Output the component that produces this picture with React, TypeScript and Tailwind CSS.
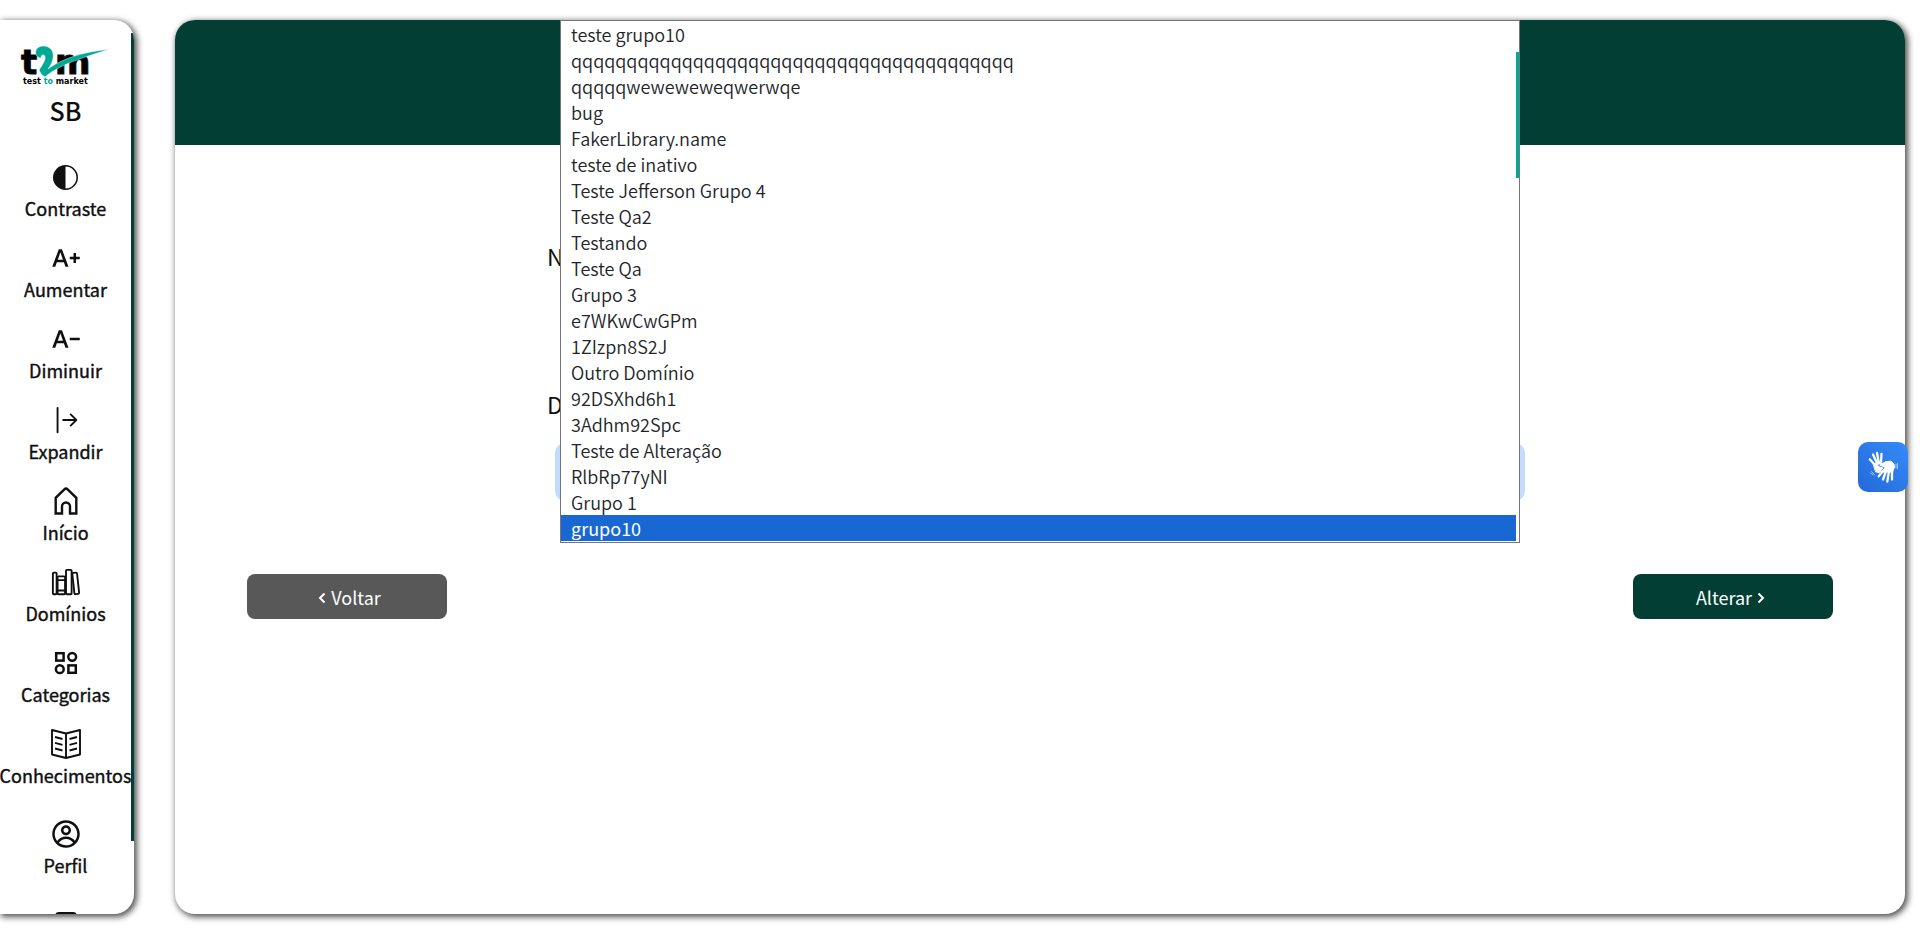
import { useState } from 'react';
import type { ReactNode } from 'react';
import { BsCircleHalf, BsArrowBarRight } from 'react-icons/bs';
import { MdTextIncrease, MdTextDecrease } from 'react-icons/md';
import { IoLibraryOutline } from 'react-icons/io5';
import { CgProfile } from 'react-icons/cg';

function HomeIcon() {
  return (
    <svg viewBox="0 0 30 30" className="size-[30px]" fill="none" stroke="currentColor" strokeWidth="2.4">
      <path d="M4.700 27.500V11.800L13.400 3.300a2.300 2.300 0 0 1 3.200 0L25.300 11.800V27.500H19V20.500a4 4 0 0 0-8 0v7z" />
    </svg>
  );
}

function CategoryIcon() {
  return (
    <svg viewBox="0 0 24 24" className="size-6" fill="none" stroke="currentColor" strokeWidth="2.5">
      <rect x="2.200" y="2.200" width="7.400" height="7.400" />
      <circle cx="18.200" cy="5.800" r="3.900" />
      <circle cx="5.800" cy="18.200" r="3.900" />
      <rect x="14.400" y="14.400" width="7.400" height="7.400" />
    </svg>
  );
}

function BookIcon() {
  return (
    <svg viewBox="0 0 30 30" className="size-[30px]" fill="none" stroke="currentColor" strokeWidth="1.900" strokeLinejoin="round">
      <path d="M1 1 15 4.500 29 1v24.500L15 29 1 25.500zM15 4.500v24.500" />
      <path d="m4 8 7.500 2M4 13.800l7.500 2M4 19.500l7.500 2M26 8l-7.500 2M26 13.800l-7.500 2M26 19.500l-7.500 2" />
    </svg>
  );
}

function HandsIcon() {
  return (
    <svg viewBox="0 0 30 32" className="h-8 w-[30px]" fill="none" stroke="currentColor" strokeLinecap="round" strokeLinejoin="round">
      <g strokeWidth="2.300">
        <path d="M1.800 8.300 7 14M5 3.500 9 12M9 1.800l1.800 10M13.500 3 13 12" />
        <path d="m15 20-4.300 5.300M18 20l-3 8.500M21 20l-1.700 10.500M24 19v9.500" />
      </g>
      <path fill="currentColor" strokeWidth="1" d="M5.500 13 12.500 10.500 14 12 9.500 13.500 10 15.500 15 17 11.500 21.500 8 21z" />
      <path fill="currentColor" strokeWidth="1" d="M12 14 18 10.500 23 10.200 26 13 26.500 16 24.500 21 14 21 17 16.500z" />
      <path strokeWidth=".8" d="M28 13v4M29.500 12.500v5M3.500 20.500l3 3M2.500 22l3 2" opacity=".7" />
    </svg>
  );
}

function Chevron({ d }: { d: string }) {
  return (
    <svg viewBox="0 0 18 18" className="mt-0.5 size-[18px]" fill="none" stroke="currentColor" strokeWidth="2">
      <path d={d} />
    </svg>
  );
}

function Logo() {
  return (
    <svg viewBox="0 0 90 46" className="h-[46px] w-[90px] overflow-visible" role="img" aria-label="t2m test to market">
      <g fontSize="34" fontWeight="700" fontFamily="DejaVu Sans, sans-serif" stroke="currentColor" strokeWidth="1">
        <text x="0" y="34">t</text>
        <text x="34" y="34">m</text>
      </g>
      <path fill="#00a896" stroke="#fff" strokeWidth=".4" d="M14.700 11C16 6 23 5 27 7c6 3 6 9 4 15-1 3-3 5-4 7C43 17 65 12 88 9.300 65 17 41 23 24 36.700c-3-1-5-4-5.700-7C23 23 26 17 23 15c-2-1-3 1-3 3C17 18 14 15 14.700 11z" />
      <text x="2" y="44" fontSize="8" fontWeight="700" fontFamily="DejaVu Sans, sans-serif">
        test <tspan fill="#00a896">to</tspan> market
      </text>
    </svg>
  );
}

function NavItem({ icon, label }: { icon: ReactNode; label: string }) {
  return (
    <a href="#" className="flex h-[81px] shrink-0 flex-col items-center gap-px pt-[3px]">
      <span className="flex h-8 items-center justify-center">{icon}</span>
      <span className="text-lg leading-7 whitespace-nowrap [-webkit-text-stroke:0.4px]">{label}</span>
    </a>
  );
}

const groups = [
  'teste grupo10',
  'qqqqqqqqqqqqqqqqqqqqqqqqqqqqqqqqqqqqqqqq',
  'qqqqqweweweweqwerwqe',
  'bug',
  'FakerLibrary.name',
  'teste de inativo',
  'Teste Jefferson Grupo 4',
  'Teste Qa2',
  'Testando',
  'Teste Qa',
  'Grupo 3',
  'e7WKwCwGPm',
  '1ZIzpn8S2J',
  'Outro Domínio',
  '92DSXhd6h1',
  '3Adhm92Spc',
  'Teste de Alteração',
  'RlbRp77yNI',
  'Grupo 1',
  'grupo10',
];

export default function App() {
  const [selected, setSelected] = useState('grupo10');

  return (
    <div className="flex h-screen gap-[41px] overflow-hidden bg-white py-5 pr-[15px] font-['Noto_Sans_CJK_JP',sans-serif] text-[#0f0f0f]">
      <aside className="relative flex w-[134px] shrink-0 flex-col overflow-hidden rounded-r-[20px] pr-[3px] shadow-[2px_2px_6px_1px_#000000b0]">
        <div className="flex h-[138px] shrink-0 flex-col items-center pt-5">
          <Logo />
          <span className="mt-1 text-[25px] leading-10 font-medium">SB</span>
        </div>
        <nav className="flex flex-col">
          <NavItem icon={<BsCircleHalf size={25} />} label="Contraste" />
          <NavItem icon={<MdTextIncrease size={30} />} label="Aumentar" />
          <NavItem icon={<MdTextDecrease size={30} />} label="Diminuir" />
          <NavItem icon={<BsArrowBarRight size={30} />} label="Expandir" />
          <NavItem icon={<HomeIcon />} label="Início" />
          <NavItem icon={<IoLibraryOutline size={30} />} label="Domínios" />
          <NavItem icon={<CategoryIcon />} label="Categorias" />
          <NavItem icon={<BookIcon />} label="Conhecimentos" />
          <div className="mt-[9px] flex flex-col">
            <NavItem icon={<CgProfile size={30} />} label="Perfil" />
            <a href="#" aria-label="Sair" className="mx-auto mt-4 h-6 w-[22px] rounded-sm border-2 border-current" />
          </div>
        </nav>
        <div className="absolute top-[13px] right-0 h-[808px] w-[3px] bg-[#023e33]" />
      </aside>

      <main className="flex min-w-0 flex-1 flex-col overflow-hidden rounded-[20px] shadow-[2px_2px_6px_1px_#000000b0]">
        <header className="h-[125px] shrink-0 bg-[#023e33]" />
        <form className="flex flex-col px-[72px]" onSubmit={(e) => e.preventDefault()}>
          <div className="mx-auto flex w-full max-w-[986px] flex-col pt-[95px]">
            <label htmlFor="nome" className="text-[23px] leading-8">Nome</label>
            <input id="nome" className="mx-3 mt-6 h-12 rounded-lg outline-none" />
            <label htmlFor="dominio" className="mt-11 text-[23px] leading-8">Domínio</label>
            <div className="relative mx-2 mt-[22px] h-[60px] rounded-xl bg-[#c2dbfe] p-[5px]">
              <select
                id="dominio"
                value={selected}
                onChange={(e) => setSelected(e.target.value)}
                className="h-full w-full appearance-none rounded-lg bg-white px-3 text-lg text-transparent"
              >
                {groups.map((name) => (
                  <option key={name}>{name}</option>
                ))}
              </select>
              <ul
                role="listbox"
                aria-label="Domínio"
                className="absolute right-[5px] bottom-[-41px] left-[5px] border border-[#767676] bg-white pr-[3px] pb-px text-lg leading-[26px] font-[350] text-[#212529]"
              >
                {groups.map((name) => (
                  <li
                    key={name}
                    role="option"
                    aria-selected={name === selected}
                    onClick={() => setSelected(name)}
                    className="h-[26px] px-2.5 aria-selected:bg-[#1967d2] aria-selected:font-normal aria-selected:text-white"
                  >
                    {name}
                  </li>
                ))}
                <li role="presentation" className="absolute top-[31px] right-0 h-[126px] w-[3px] bg-[#00a896]" />
              </ul>
            </div>
          </div>
          <div className="mt-[72px] flex justify-between text-lg text-white">
            <button type="button" className="flex h-[45px] w-[200px] items-center justify-center rounded-lg bg-[#585858]">
              <Chevron d="m11.500 4.500-4.500 4.500 4.500 4.500" />
              Voltar
            </button>
            <button type="submit" className="flex h-[45px] w-[200px] items-center justify-center rounded-lg bg-[#023e33]">
              Alterar
              <Chevron d="m6.500 4.500 4.500 4.500-4.500 4.500" />
            </button>
          </div>
        </form>
      </main>

      <button
        type="button"
        aria-label="Libras"
        className="fixed top-[442px] right-3 flex size-[50px] items-center justify-center rounded-[10px] bg-linear-to-tr from-[#2468d8] to-[#358cf8] text-white"
      >
        <HandsIcon />
      </button>
    </div>
  );
}
